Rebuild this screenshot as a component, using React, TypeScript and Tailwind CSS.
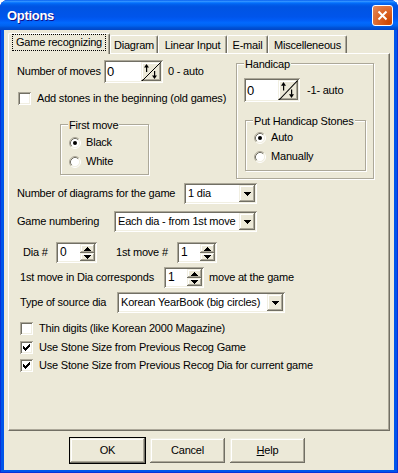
import React from "react";

const RAISED =
  "shadow-[inset_-1px_-1px_0_#716f64,inset_1px_1px_0_#f1efe2,inset_-2px_-2px_0_#aca899,inset_2px_2px_0_#ffffff]";
const SUNKEN =
  "shadow-[inset_1px_1px_0_#aca899,inset_-1px_-1px_0_#ffffff,inset_2px_2px_0_#716f64,inset_-2px_-2px_0_#f1efe2]";

const CHECK = ["......#", ".....##", "#...###", "##.###.", "#####..", ".###...", "..#...."];
const DOWN = ["#######", ".#####.", "..###..", "...#..."];
const UP_S = ["...#...", "..###..", ".#####.", "#######"];

function Pixels({ rows, color = "#000" }: { rows: string[]; color?: string }) {
  const w = rows[0].length;
  const h = rows.length;
  return (
    <svg width={w} height={h} viewBox={`0 0 ${w} ${h}`} shapeRendering="crispEdges" className="block">
      {rows.flatMap((r, y) =>
        r.split("").map((c, x) =>
          c === "#" ? <rect key={`${x}-${y}`} x={x} y={y} width="1" height="1" fill={color} /> : null
        )
      )}
    </svg>
  );
}

function Check({ checked }: { checked?: boolean }) {
  return (
    <span className={`flex h-[13px] w-[13px] shrink-0 items-center justify-center bg-white ${SUNKEN}`}>
      {checked && <Pixels rows={CHECK} />}
    </span>
  );
}

function Radio({ checked }: { checked?: boolean }) {
  return (
    <svg width="12" height="12" viewBox="0 0 12 12" className="block shrink-0">
      <circle cx="6" cy="6" r="4.5" fill="#fff" />
      <path d="M2.11 9.89A5.5 5.5 0 0 1 9.89 2.11" fill="none" stroke="#aca899" />
      <path d="M9.89 2.11A5.5 5.5 0 0 1 2.11 9.89" fill="none" stroke="#fff" />
      <path d="M2.82 9.18A4.5 4.5 0 0 1 9.18 2.82" fill="none" stroke="#716f64" />
      <path d="M9.18 2.82A4.5 4.5 0 0 1 2.82 9.18" fill="none" stroke="#f1efe2" />
      {checked && <circle cx="6" cy="6" r="2" fill="#000" />}
    </svg>
  );
}

function Group({
  label,
  className,
  children,
}: {
  label: string;
  className?: string;
  children?: React.ReactNode;
}) {
  return (
    <div
      className={`relative flex flex-col border border-[#aca899] shadow-[inset_1px_1px_0_#fff,1px_1px_0_#fff] ${className || ""}`}
    >
      <span className="absolute -top-[6px] left-[7px] bg-[#ece9d8] px-[1px] whitespace-nowrap">{label}</span>
      {children}
    </div>
  );
}

function RadioRow({ label, checked, className }: { label: string; checked?: boolean; className?: string }) {
  return (
    <div className={`flex h-[13px] items-center gap-[5px] ${className || ""}`}>
      <Radio checked={checked} />
      <span>{label}</span>
    </div>
  );
}

function CheckRow({ label, checked, className }: { label: string; checked?: boolean; className?: string }) {
  return (
    <div className={`flex h-[13px] items-center gap-[6px] whitespace-nowrap ${className || ""}`}>
      <Check checked={checked} />
      <span>{label}</span>
    </div>
  );
}

function ArrowSpin({ value, className }: { value: string; className?: string }) {
  return (
    <div className={`flex shrink-0 bg-white p-[2px] ${SUNKEN} ${className || ""}`}>
      <span className="flex flex-1 items-center pl-[1px] text-[13px]">{value}</span>
      <span className={`flex w-[20px] bg-[#ece9d8] ${RAISED}`}>
        <svg width="20" height="100%" viewBox="0 0 20 19" preserveAspectRatio="none" className="block">
          <line x1="1" y1="19" x2="19.5" y2="0.5" stroke="#000" strokeWidth="1" />
          <path d="M3 5.5L5.5 2L8 5.5Z" fill="#000" />
          <rect x="5" y="5" width="1.2" height="5" fill="#000" />
          <path d="M11 13.5L13.5 17L16 13.5Z" fill="#000" />
          <rect x="13" y="9" width="1.2" height="5" fill="#000" />
        </svg>
      </span>
    </div>
  );
}

function UpDown({ value, className }: { value: string; className?: string }) {
  return (
    <div className={`flex h-[21px] shrink-0 bg-white p-[2px] ${SUNKEN} ${className || ""}`}>
      <span className="flex flex-1 items-center pl-[2px] text-[12px]">{value}</span>
      <span className="flex w-[15px] flex-col">
        <span className={`flex h-[9px] items-center justify-center bg-[#ece9d8] ${RAISED}`}>
          <Pixels rows={UP_S} />
        </span>
        <span className={`flex h-[8px] items-center justify-center bg-[#ece9d8] ${RAISED}`}>
          <Pixels rows={DOWN} />
        </span>
      </span>
    </div>
  );
}

function Combo({ text, className }: { text: string; className?: string }) {
  return (
    <div className={`flex h-[21px] shrink-0 bg-white p-[2px] ${SUNKEN} ${className || ""}`}>
      <span className="flex flex-1 items-center overflow-hidden whitespace-nowrap pl-[2px]">{text}</span>
      <span className={`flex w-[16px] items-center justify-center bg-[#ece9d8] ${RAISED}`}>
        <Pixels rows={DOWN} />
      </span>
    </div>
  );
}

function Button({ children, isDefault }: { children: React.ReactNode; isDefault?: boolean }) {
  return (
    <button
      className={`flex h-[25px] w-[75px] items-center justify-center bg-[#ece9d8] ${RAISED} ${
        isDefault ? "outline outline-1 outline-black" : ""
      }`}
    >
      {children}
    </button>
  );
}

const TABS = [
  { label: "Diagram", w: "w-[48px]" },
  { label: "Linear Input", w: "w-[69px]" },
  { label: "E-mail", w: "w-[41px]" },
  { label: "Miscelleneous", w: "w-[79px]" },
];

export default function App() {
  return (
    <div className="h-[473px] w-[398px] bg-white font-['Liberation_Sans',Arial,sans-serif] text-[11px] leading-[13px] tracking-[-0.2px] text-black">
      <div className="flex h-full flex-col overflow-hidden rounded-t-[8px] bg-[#0055ea] shadow-[inset_1px_0_0_#0831d9,inset_-1px_0_0_#0831d9,inset_0_-1px_0_#0831d9]">
        {/* title bar */}
        <div className="flex h-[30px] shrink-0 items-center justify-between bg-[linear-gradient(180deg,#0058ee_0%,#3593ff_4%,#288eff_6%,#127dff_8%,#036ffc_10%,#0262ee_14%,#0057e5_20%,#0054e3_24%,#0055eb_56%,#005bf5_66%,#026afe_76%,#0062ef_86%,#0052d6_92%,#0046c7_100%)] pl-[7px] pr-[5px]">
          <span className="pt-[1px] text-[13px] font-bold tracking-[-0.3px] text-white [text-shadow:1px_1px_#0f1089]">
            Options
          </span>
          <span className="flex h-[21px] w-[21px] items-center justify-center rounded-[3px] border border-white bg-[radial-gradient(circle_at_85%_85%,#cc4600_0%,#dc6527_50%,#e48a5d_100%)]">
            <svg width="11" height="11" viewBox="0 0 11 11">
              <path d="M1.5 1.5L9.5 9.5M9.5 1.5L1.5 9.5" stroke="#fff" strokeWidth="2" />
            </svg>
          </span>
        </div>

        {/* body */}
        <div className="mx-[4px] mb-[3px] flex flex-1 flex-col bg-[#ece9d8]">
          {/* tabs */}
          <div className="flex h-[23px] items-end pl-[4px] pt-[3px]">
            <div className="relative z-10 -mb-[1px] flex h-[21px] w-[102px] items-start justify-center rounded-t-[2px] border-l border-t border-r border-white border-r-[#716f64] bg-[#ece9d8] pt-[1px] shadow-[inset_-1px_0_0_#aca899]">
              <span className="px-[2px] py-[1px] outline outline-1 outline-dotted outline-black">
                <span className="block px-[1px]">Game recognizing</span>
              </span>
            </div>
            {TABS.map((t) => (
              <div
                key={t.label}
                className={`flex h-[18px] ${t.w} items-center justify-center rounded-t-[2px] border-l border-t border-r border-white border-r-[#716f64] pt-[1px] shadow-[inset_-1px_0_0_#aca899]`}
              >
                {t.label}
              </div>
            ))}
          </div>

          {/* panel */}
          <div className="mx-[4px] flex h-[378px] flex-col border border-white border-b-[#716f64] border-r-[#716f64] shadow-[inset_-1px_-1px_0_#aca899]">
            <div className="mt-[3px] flex">
              <div className="flex w-[227px] flex-col pt-[3px]">
                <div className="ml-[8px] flex h-[23px] items-center">
                  <span className="w-[87px] whitespace-nowrap">Number of moves</span>
                  <ArrowSpin value="0" className="h-[23px] w-[59px]" />
                  <span className="ml-[5px]">0 - auto</span>
                </div>
                <CheckRow label="Add stones in the beginning (old games)" className="ml-[9px] mt-[9px] gap-[5px]" />
                <Group label="First move" className="ml-[51px] mt-[19px] h-[51px] w-[89px]">
                  <RadioRow label="Black" checked className="ml-[8px] mt-[11px]" />
                  <RadioRow label="White" className="ml-[8px] mt-[6px]" />
                </Group>
              </div>

              <Group label="Handicap" className="mt-[6px] h-[116px] w-[138px]">
                <div className="ml-[7px] mt-[14px] flex items-center">
                  <ArrowSpin value="0" className="h-[24px] w-[56px]" />
                  <span className="ml-[7px]">-1- auto</span>
                </div>
                <Group label="Put Handicap Stones" className="ml-[8px] mt-[18px] h-[51px] w-[121px]">
                  <RadioRow label="Auto" checked className="ml-[8px] mt-[10px]" />
                  <RadioRow label="Manually" className="ml-[8px] mt-[6px]" />
                </Group>
              </Group>
            </div>

            <div className="ml-[8px] mt-[4px] flex h-[21px] items-center">
              <span className="w-[167px] whitespace-nowrap">Number of diagrams for the game</span>
              <Combo text="1 dia" className="w-[73px]" />
            </div>

            <div className="ml-[8px] mt-[7px] flex h-[21px] items-center">
              <span className="w-[97px] whitespace-nowrap">Game numbering</span>
              <Combo text="Each dia - from 1st move" className="w-[143px]" />
            </div>

            <div className="ml-[14px] mt-[10px] flex h-[21px] items-center">
              <span className="w-[33px] whitespace-nowrap">Dia #</span>
              <UpDown value="0" className="w-[41px]" />
              <span className="ml-[19px] w-[61px] whitespace-nowrap">1st move #</span>
              <UpDown value="1" className="w-[40px]" />
            </div>

            <div className="ml-[11px] mt-[4px] flex h-[21px] items-center">
              <span className="w-[144px] whitespace-nowrap">1st move in Dia corresponds</span>
              <UpDown value="1" className="w-[40px]" />
              <span className="ml-[5px] whitespace-nowrap">move at the game</span>
            </div>

            <div className="ml-[11px] mt-[4px] flex h-[21px] items-center">
              <span className="w-[97px] whitespace-nowrap">Type of source dia</span>
              <Combo text="Korean YearBook (big circles)" className="w-[168px]" />
            </div>

            <CheckRow label="Thin digits (like Korean 2000 Magazine)" className="ml-[11px] mt-[9px]" />
            <CheckRow label="Use Stone Size from Previous Recog Game" checked className="ml-[11px] mt-[6px]" />
            <CheckRow
              label="Use Stone Size from Previous Recog Dia for current game"
              checked
              className="ml-[11px] mt-[5px]"
            />
          </div>

          {/* buttons */}
          <div className="ml-[66px] mt-[7px] flex gap-[5px]">
            <Button isDefault>OK</Button>
            <Button>Cancel</Button>
            <Button>
              <span>
                <span className="underline">H</span>elp
              </span>
            </Button>
          </div>
        </div>
      </div>
    </div>
  );
}
